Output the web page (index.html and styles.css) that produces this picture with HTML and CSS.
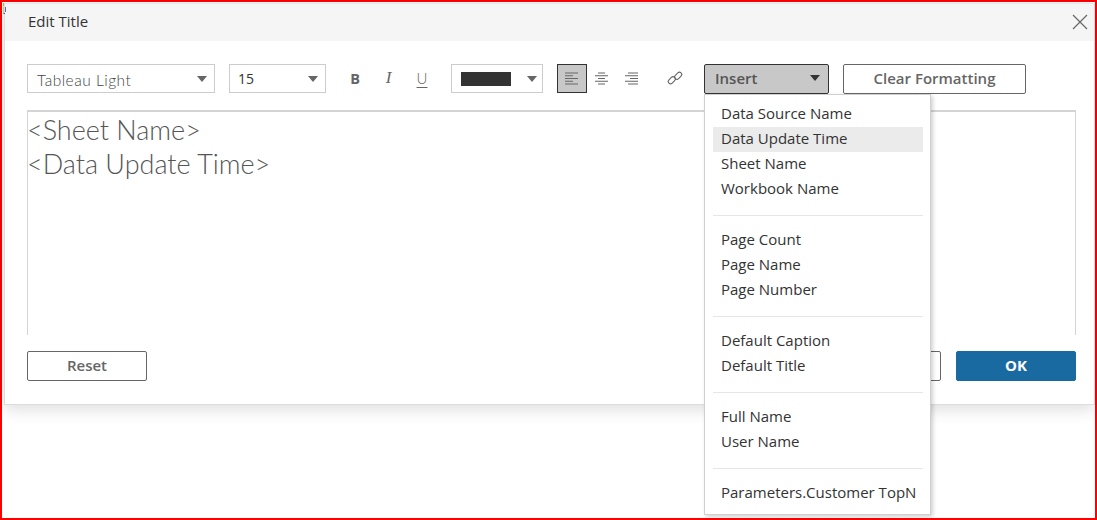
FILE: index.html
```html
<!DOCTYPE html>
<html lang="en">
<head>
<meta charset="utf-8">
<title>Edit Title</title>
<link rel="stylesheet" href="styles.css">
</head>
<body>
<div class="frame">
  <svg class="corner-mark" width="6" height="14" viewBox="0 0 6 14"><path d="M1.5 1V4" stroke="#e8a030" fill="none"/><path d="M1.5 4.5V11" stroke="#e8c060" fill="none"/><path d="M3.5 5V10" stroke="#5070b0" fill="none"/><path d="M1.5 11.5H3" stroke="#555" fill="none"/></svg>
  <div class="dialog">
    <header class="dialog-head">
      <h1 class="dialog-title">Edit Title</h1>
      <svg class="close" width="16" height="16" viewBox="0 0 16 16"><path d="M1 1L15 15M15 1L1 15" stroke="#666" stroke-width="1.2" fill="none"/></svg>
    </header>
    <div class="toolbar">
      <div class="select select-font"><span class="font-name">Tableau Light</span><i class="caret"></i></div>
      <div class="select select-size"><span>15</span><i class="caret"></i></div>
      <div class="format-group">
        <span class="fmt fmt-b">B</span>
        <span class="fmt fmt-i">I</span>
        <span class="fmt fmt-u">U</span>
      </div>
      <div class="select select-color"><span class="swatch"></span><i class="caret"></i></div>
      <div class="align-group">
        <span class="align-btn active"><svg width="14" height="14" viewBox="0 0 14 14"><path d="M0 1H13M0 3.75H8M0 6.5H13M0 9.25H8M0 12H13" stroke="#666" stroke-width="1.1" fill="none"/></svg></span>
        <span class="align-btn"><svg width="14" height="14" viewBox="0 0 14 14"><path d="M3 1H10M0 3.75H13M3 6.5H10M0 9.25H13M3 12H10" stroke="#666" stroke-width="1.1" fill="none"/></svg></span>
        <span class="align-btn"><svg width="14" height="14" viewBox="0 0 14 14"><path d="M3 1H13M0 3.75H13M5 6.5H13M0 9.25H13M3 12H13" stroke="#666" stroke-width="1.1" fill="none"/></svg></span>
      </div>
      <svg class="link-icon" width="16" height="16" viewBox="0 0 16 16"><g fill="none" stroke="#666" stroke-width="1.1"><rect x="0.8" y="8" width="8" height="4.6" rx="2.3" transform="rotate(-45 4.8 10.3)"/><rect x="7.2" y="3.4" width="8" height="4.6" rx="2.3" transform="rotate(-45 11.2 5.7)"/></g></svg>
      <div class="insert-btn"><span>Insert</span><i class="caret caret-dark"></i></div>
      <div class="btn btn-clear">Clear Formatting</div>
    </div>
    <div class="editor">
      <div>&lt;Sheet Name&gt;</div>
      <div>&lt;Data Update Time&gt;</div>
    </div>
    <footer class="dialog-foot">
      <div class="btn btn-wide">Reset</div>
      <div class="foot-right">
        <div class="btn btn-wide">Cancel</div>
        <div class="btn btn-wide btn-primary">OK</div>
      </div>
    </footer>
  </div>
  <div class="menu">
    <ul class="menu-group">
      <li>Data Source Name</li>
      <li class="hover">Data Update Time</li>
      <li>Sheet Name</li>
      <li>Workbook Name</li>
    </ul>
    <ul class="menu-group">
      <li>Page Count</li>
      <li>Page Name</li>
      <li>Page Number</li>
    </ul>
    <ul class="menu-group">
      <li>Default Caption</li>
      <li>Default Title</li>
    </ul>
    <ul class="menu-group">
      <li>Full Name</li>
      <li>User Name</li>
    </ul>
    <ul class="menu-group">
      <li>Parameters.Customer TopN</li>
    </ul>
  </div>
</div>
</body>
</html>
```
FILE: styles.css
```css
* { box-sizing: border-box; }
html, body { margin: 0; padding: 0; background: #fff; }
body { font-family: "Open Sans", "Noto Sans", sans-serif; color: #333; overflow: hidden; }
.frame { position: relative; width: 1097px; height: 520px; border: 2px solid #f00; padding: 1px 0 0 2px; }
.corner-mark { position: absolute; left: 0; top: 0; }
.dialog { width: 1091px; height: 402px; background: #fff; border: 1px solid #ddd; border-top-color: #e8e8e8; box-shadow: 0 4px 16px rgba(0,0,0,.14); display: flex; flex-direction: column; }
.dialog-head { height: 37px; background: #f5f5f5; display: flex; align-items: center; justify-content: space-between; padding: 0 6px 0 23px; flex: none; }
.dialog-title { margin: 0 0 3px; font-size: 15px; font-weight: 400; color: #333; }
.close { margin-bottom: 1px; }
.toolbar { display: flex; align-items: flex-start; padding: 23px 0 0 22px; height: 69px; flex: none; }
.select { height: 29px; border: 1px solid #ccc; display: flex; align-items: center; justify-content: space-between; font-size: 14px; flex: none; }
.select-font { width: 188px; padding: 0 7px 0 9px; margin-right: 14px; }
.font-name { font-family: Lato, sans-serif; font-weight: 300; color: #444; font-size: 15.5px; letter-spacing: .5px; padding-top: 3px; }
.select-size { width: 97px; padding: 0 7px 0 8px; margin-right: 17px; }
.caret { display: block; width: 0; height: 0; border-left: 5px solid transparent; border-right: 5px solid transparent; border-top: 6px solid #666; }
.caret-dark { border-top-color: #333; }
.format-group { display: flex; gap: 9.5px; width: 108px; height: 29px; padding-bottom: 1px; align-items: center; font-size: 14px; color: #666; flex: none; }
.fmt { width: 24px; text-align: center; }
.fmt-b { font-weight: 700; font-size: 14.5px; }
.fmt-i { font-style: italic; font-family: "Liberation Serif", serif; font-size: 17px; }
.fmt-u { text-decoration: underline; text-underline-offset: 3px; font-family: Lato, sans-serif; font-weight: 300; font-size: 15px; }
.select-color { width: 92px; padding: 0 5px 0 9px; margin-right: 14px; }
.swatch { width: 50px; height: 14px; background: #333; display: block; }
.align-group { display: flex; width: 90px; height: 29px; flex: none; }
.align-btn { width: 30px; height: 29px; display: flex; align-items: center; justify-content: center; flex: none; }
.align-btn.active { background: #c8c8c8; border: 1px solid #333; }
.link-icon { margin: 6px 21px 0 20px; flex: none; }
.insert-btn { width: 125px; height: 30px; background: #c8c8c8; border: 1px solid #333; border-radius: 2px; display: flex; align-items: center; justify-content: space-between; padding: 0 8px 2px 10px; font-size: 15px; font-weight: 600; color: #555; margin-right: 14px; flex: none; }
.btn { height: 30px; border: 1px solid #666; border-radius: 2px; display: flex; align-items: center; justify-content: center; padding-bottom: 2px; font-size: 15px; font-weight: 600; color: #666; background: #fff; flex: none; }
.btn-clear { width: 183px; }
.editor { margin-left: 22px; width: 1049px; height: 225px; flex: none; border: 1px solid #d4d4d4; border-top: 2px solid #d4d4d4; border-bottom: 0; padding-top: 1px; font-family: Lato, sans-serif; font-weight: 300; font-size: 27px; line-height: 34px; color: #555; text-indent: -1px; }
.dialog-foot { display: flex; justify-content: space-between; padding: 16px 18px 0 22px; }
.foot-right { display: flex; gap: 15px; }
.btn-wide { width: 120px; }
.btn-primary { background: #1a6aa2; border-color: #1a6aa2; color: #fff; font-weight: 700; }
.menu { position: absolute; left: 702px; top: 92px; width: 227px; height: 421px; background: #fff; border: 1px solid #d0d0d0; box-shadow: 2px 2px 4px rgba(0,0,0,.18); padding: 7px 7px 0 8px; }
.menu-group { list-style: none; margin: 0 0 12px; padding: 0 0 13px; border-bottom: 1px solid #e6e6e6; }
.menu-group:last-child { border-bottom: 0; margin: 0; padding: 0; }
.menu-group li { height: 25px; line-height: 23px; padding-left: 8px; font-size: 15px; color: #333; white-space: nowrap; }
.menu-group li.hover { background: #ebebeb; }
```
